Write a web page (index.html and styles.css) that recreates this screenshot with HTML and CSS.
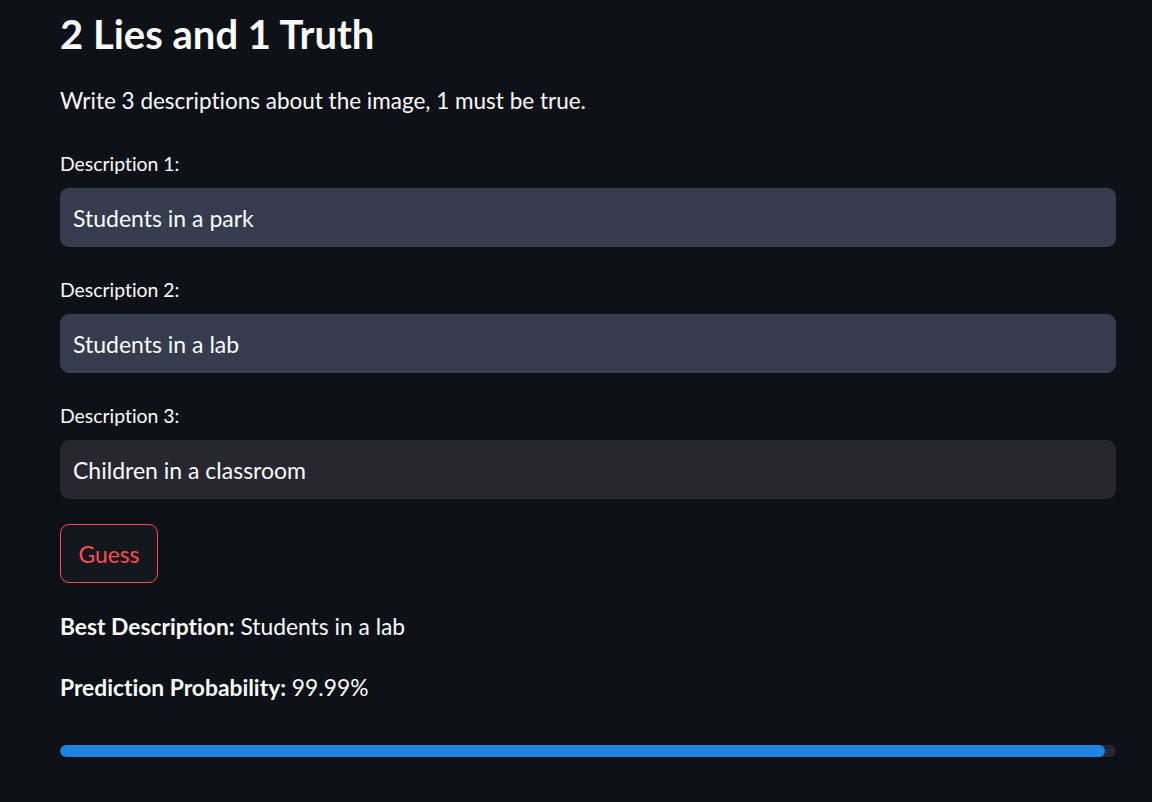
FILE: index.html
```html
<!DOCTYPE html>
<html lang="en">
<head>
<meta charset="utf-8">
<title>2 Lies and 1 Truth</title>
<link rel="stylesheet" href="styles.css">
</head>
<body>
<main class="main">
  <h1 class="title">2 Lies and 1 Truth</h1>
  <p class="intro">Write 3 descriptions about the image, 1 must be true.</p>

  <div class="field">
    <label class="label" for="d1">Description 1:</label>
    <input id="d1" class="input input-active" type="text" value="Students in a park">
  </div>
  <div class="field">
    <label class="label" for="d2">Description 2:</label>
    <input id="d2" class="input input-active" type="text" value="Students in a lab">
  </div>
  <div class="field">
    <label class="label" for="d3">Description 3:</label>
    <input id="d3" class="input" type="text" value="Children in a classroom">
  </div>

  <button class="btn" type="button">Guess</button>

  <p class="result result-best"><strong>Best Description:</strong> Students in a lab</p>
  <p class="result result-prob"><strong>Prediction Probability:</strong> 99.99%</p>

  <div class="progress"><div class="progress-fill" style="width:99%"></div></div>
</main>
</body>
</html>
```
FILE: styles.css
```css
* { box-sizing: border-box; }
html, body { margin: 0; padding: 0; }
body {
  background: #0e1117;
  color: #fafafa;
  font-family: "Lato", "Noto Sans", sans-serif;
  font-variant-ligatures: none;
}
.main {
  width: 1152px;
  padding: 10px 36px 0 60px;
}
.title {
  margin: 0;
  font-size: 40px;
  font-weight: 700;
  line-height: 48px;
  height: 48px;
}
.intro {
  margin: 28px 0 0;
  font-size: 22.5px;
  line-height: 30px;
}
.field {
  display: flex;
  flex-direction: column;
  gap: 11px;
  margin-top: 35px;
}
.field + .field { margin-top: 30px; }
.label {
  font-size: 19.4px;
  line-height: 26px;
}
.input {
  width: 100%;
  height: 59px;
  padding: 0 12px;
  border: 1px solid #262730;
  border-radius: 9px;
  background: #262730;
  color: #fafafa;
  font-family: inherit;
  font-variant-ligatures: none;
  font-size: 23px;
  outline: none;
}
.input-active {
  background: #353c4e;
  border-color: #393f52;
}
.btn {
  display: block;
  margin-top: 25px;
  height: 59px;
  padding: 0 17.5px;
  border: 1px solid #ff4b4b;
  border-radius: 9px;
  background: #131720;
  color: #ff4b4b;
  font-family: inherit;
  font-size: 22.8px;
}
.result {
  margin: 0;
  font-size: 22.8px;
  line-height: 30px;
}
.result-best { margin-top: 28px; }
.result-prob { margin-top: 31px; }
.result strong { font-weight: 700; }
.progress {
  margin-top: 43px;
  height: 12px;
  border-radius: 6px;
  background: #262730;
  overflow: hidden;
}
.progress-fill {
  height: 100%;
  border-radius: 6px;
  background: #1f83e0;
}
```
